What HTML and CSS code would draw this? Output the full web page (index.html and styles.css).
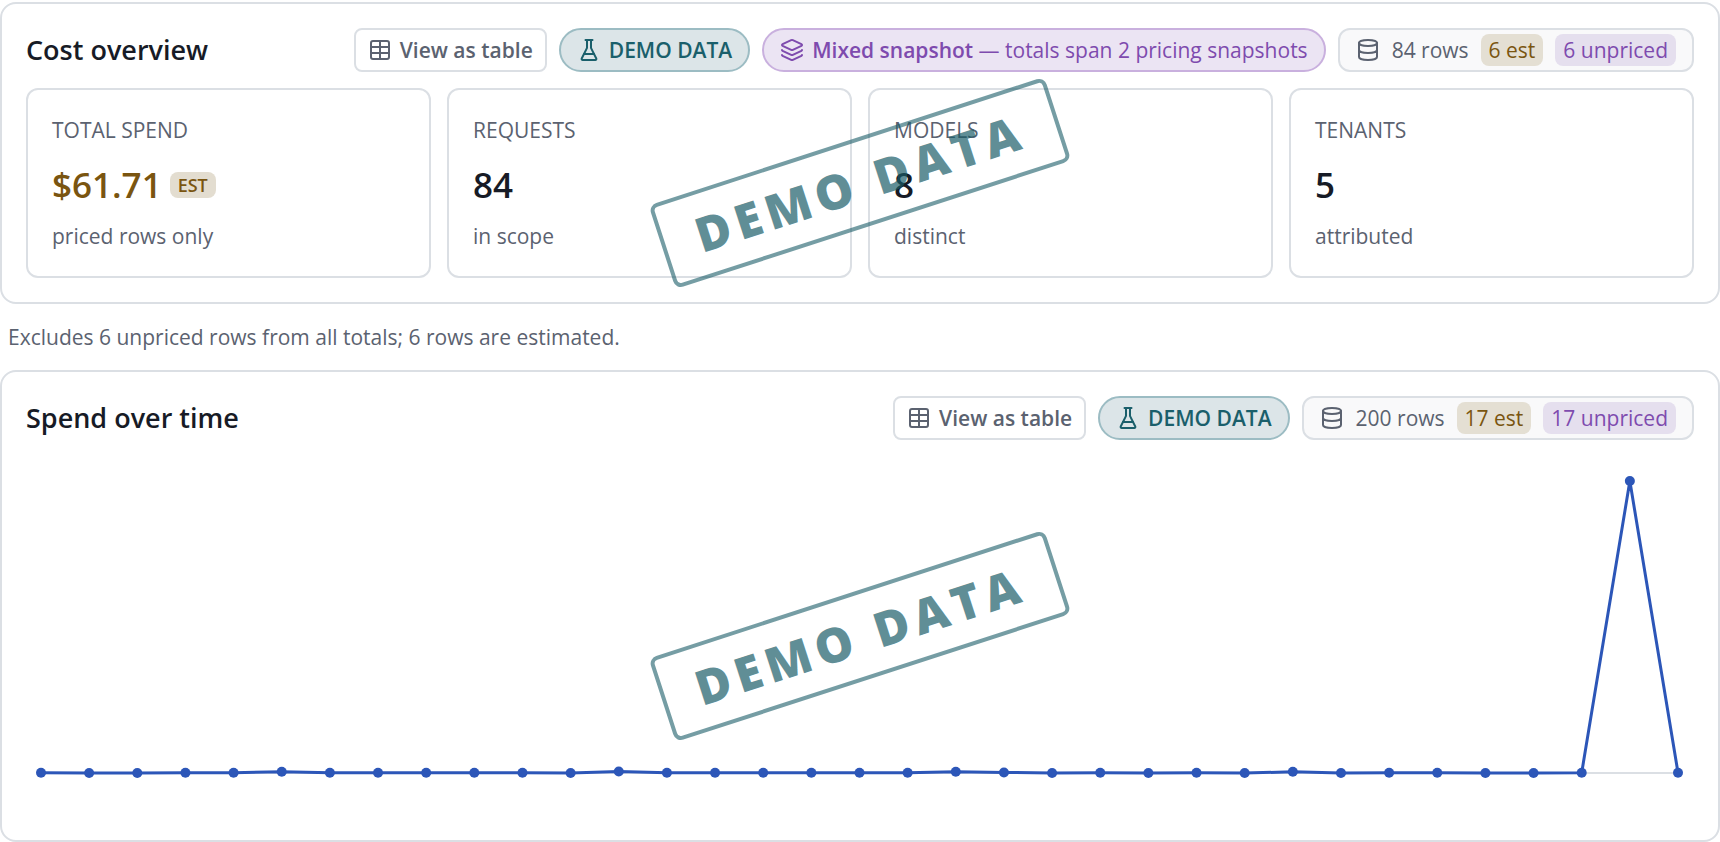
FILE: index.html
```html
<!DOCTYPE html>
<html lang="en">
<head>
    <meta charset="UTF-8">
    <meta name="viewport" content="width=device-width, initial-scale=1.0">
    <title>Cost overview</title>
    <link rel="stylesheet" href="styles.css">
</head>
<body>
    <!-- Shared icons -->
    <svg class="icon-defs" aria-hidden="true">
        <symbol id="icon-table" viewBox="0 0 24 24">
            <rect x="3" y="3" width="18" height="18" rx="2"/>
            <path d="M12 3v18M3 9h18M3 15h18"/>
        </symbol>
        <symbol id="icon-flask" viewBox="0 0 24 24">
            <path d="M10 2v7.527a2 2 0 0 1-.211.896L4.72 20.55a1 1 0 0 0 .9 1.45h12.76a1 1 0 0 0 .9-1.45l-5.069-10.127A2 2 0 0 1 14 9.527V2"/>
            <path d="M8.5 2h7M7 16h10"/>
        </symbol>
        <symbol id="icon-layers" viewBox="0 0 24 24">
            <path d="M12.83 2.18a2 2 0 0 0-1.66 0L2.6 6.08a1 1 0 0 0 0 1.83l8.58 3.91a2 2 0 0 0 1.66 0l8.58-3.9a1 1 0 0 0 0-1.83z"/>
            <path d="M2 12a1 1 0 0 0 .58.91l8.6 3.91a2 2 0 0 0 1.65 0l8.58-3.9A1 1 0 0 0 22 12"/>
            <path d="M2 17a1 1 0 0 0 .58.91l8.6 3.91a2 2 0 0 0 1.65 0l8.58-3.9A1 1 0 0 0 22 17"/>
        </symbol>
        <symbol id="icon-database" viewBox="0 0 24 24">
            <ellipse cx="12" cy="5" rx="9" ry="3"/>
            <path d="M3 5v14a9 3 0 0 0 18 0V5M3 12a9 3 0 0 0 18 0"/>
        </symbol>
    </svg>

    <section class="card">
        <header class="card-header">
            <h2 class="card-title">Cost overview</h2>
            <div class="card-actions">
                <button type="button" class="table-button"><svg class="icon"><use href="#icon-table"/></svg>View as table</button>
                <span class="pill demo"><svg class="icon"><use href="#icon-flask"/></svg>DEMO DATA</span>
                <span class="pill mixed"><svg class="icon"><use href="#icon-layers"/></svg><span><strong>Mixed snapshot</strong> — totals span 2 pricing snapshots</span></span>
                <span class="rows"><svg class="icon"><use href="#icon-database"/></svg>84 rows <span class="tag est">6 est</span> <span class="tag unpriced">6 unpriced</span></span>
            </div>
        </header>
        <div class="card-body">
            <div class="tiles">
                <div class="tile">
                    <div class="tile-label">TOTAL SPEND</div>
                    <div class="tile-value estimated">$61.71 <span class="est-badge">EST</span></div>
                    <div class="tile-note">priced rows only</div>
                </div>
                <div class="tile">
                    <div class="tile-label">REQUESTS</div>
                    <div class="tile-value">84</div>
                    <div class="tile-note">in scope</div>
                </div>
                <div class="tile">
                    <div class="tile-label">MODELS</div>
                    <div class="tile-value">8</div>
                    <div class="tile-note">distinct</div>
                </div>
                <div class="tile">
                    <div class="tile-label">TENANTS</div>
                    <div class="tile-value">5</div>
                    <div class="tile-note">attributed</div>
                </div>
            </div>
            <div class="watermark"><span class="stamp">DEMO DATA</span></div>
        </div>
    </section>

    <p class="footnote">Excludes 6 unpriced rows from all totals; 6 rows are estimated.</p>

    <section class="card">
        <header class="card-header">
            <h2 class="card-title">Spend over time</h2>
            <div class="card-actions">
                <button type="button" class="table-button"><svg class="icon"><use href="#icon-table"/></svg>View as table</button>
                <span class="pill demo"><svg class="icon"><use href="#icon-flask"/></svg>DEMO DATA</span>
                <span class="rows"><svg class="icon"><use href="#icon-database"/></svg>200 rows <span class="tag est">17 est</span> <span class="tag unpriced">17 unpriced</span></span>
            </div>
        </header>
        <div class="card-body">
            <svg class="chart" id="chart" viewBox="0 0 1668 360" role="img" aria-label="Spend over time">
                <line class="axis" x1="15" y1="317" x2="1652" y2="317"/>
            </svg>
            <div class="watermark"><span class="stamp">DEMO DATA</span></div>
        </div>
    </section>

    <script>
        // Daily spend, in thousandths of the peak day
        const spend = [1, 0, 0, 1, 1, 4, 1, 1, 1, 1, 1, 0, 5, 1, 1, 1, 1, 1, 1, 4, 2, 0, 1, 0, 1, 0, 4, 0, 1, 1, 0, 0, 1, 1000, 1];
        const plot = { left: 15, right: 1652, top: 25, bottom: 317 };

        const chart = document.getElementById('chart');
        const max = Math.max(...spend);
        const points = spend.map((value, i) => ({
            x: plot.left + (plot.right - plot.left) * i / (spend.length - 1),
            y: plot.bottom - (plot.bottom - plot.top) * value / max
        }));

        function addShape(name, attributes) {
            const shape = document.createElementNS('http://www.w3.org/2000/svg', name);
            for (const key in attributes) {
                shape.setAttribute(key, attributes[key]);
            }
            chart.appendChild(shape);
        }

        addShape('polyline', { class: 'line', points: points.map(p => `${p.x},${p.y}`).join(' ') });
        points.forEach(p => addShape('circle', { class: 'dot', cx: p.x, cy: p.y, r: 5 }));
    </script>
</body>
</html>
```

FILE: styles.css
```css
* {
    box-sizing: border-box;
}

body {
    margin: 0;
    padding-top: 2px;
    background-color: white;
    color: #171b26;
    font-family: "Open Sans", "Noto Sans", sans-serif;
    font-size: 21px;
    line-height: 32px;
}

.icon-defs {
    display: none;
}

.icon {
    width: 24px;
    height: 24px;
    flex: none;
    fill: none;
    stroke: currentColor;
    stroke-width: 2;
    stroke-linecap: round;
    stroke-linejoin: round;
}

.card {
    padding: 24px;
    border: 2px solid #dbdfe4;
    border-radius: 16px;
}

.card-header {
    display: flex;
    flex-wrap: wrap;
    align-items: center;
    justify-content: space-between;
    gap: 12px;
    margin-bottom: 16px;
}

.card-title {
    margin: 0;
    font-size: 27px;
    font-weight: 600;
}

.card-actions {
    display: flex;
    flex-wrap: wrap;
    gap: 12px;
}

.table-button,
.pill,
.rows {
    display: flex;
    align-items: center;
    gap: 8px;
    min-height: 44px;
    border: 2px solid #dbdfe4;
    white-space: nowrap;
}

.table-button {
    padding: 0 12px;
    border-radius: 8px;
    background-color: white;
    color: #5b6270;
    font-family: inherit;
    font-size: 21px;
    font-weight: 600;
    cursor: pointer;
}

.pill {
    padding: 0 16px;
    border-radius: 22px;
}

.demo {
    border-color: #9cbcc3;
    background-color: #dce5e8;
    color: #1a5f6b;
    font-weight: 600;
}

.mixed {
    border-color: #c9b0de;
    background-color: #ebe4f3;
    color: #7e4bae;
}

.mixed strong {
    font-weight: 600;
}

.rows {
    gap: 12px;
    padding: 0 16px;
    border-radius: 12px;
    background-color: #f9f9fa;
    color: #5b6270;
}

.tag {
    padding: 0 8px;
    border-radius: 8px;
}

.est {
    background-color: #e4dfd3;
    color: #7a5510;
}

.unpriced {
    background-color: #e5dfee;
    color: #7e4bae;
}

.card-body {
    position: relative;
}

.tiles {
    display: grid;
    grid-template-columns: repeat(4, 1fr);
    gap: 16px;
}

.tile {
    padding: 24px;
    border: 2px solid #dbdfe4;
    border-radius: 12px;
}

.tile-label,
.tile-note {
    color: #5b6270;
    line-height: 32px;
}

.tile-value {
    display: flex;
    align-items: center;
    gap: 8px;
    margin: 12px 0 8px;
    font-size: 35px;
    font-weight: 600;
    line-height: 54px;
}

.estimated {
    color: #7a5510;
}

.est-badge {
    padding: 0 8px;
    border-radius: 8px;
    background-color: #e3ddd0;
    font-size: 18px;
    line-height: 26px;
}

.footnote {
    margin: 0;
    padding: 17px 8px;
    color: #5b6270;
}

.chart {
    display: block;
    width: 100%;
}

.axis {
    stroke: #dbdfe4;
    stroke-width: 2;
}

.line {
    fill: none;
    stroke: #2c56b8;
    stroke-width: 3;
    stroke-linejoin: round;
}

.dot {
    fill: #2c56b8;
}

/* Stamp laid over the card content */
.watermark {
    position: absolute;
    inset: 0;
    display: flex;
    align-items: center;
    justify-content: center;
    pointer-events: none;
}

.stamp {
    padding: 8px 32px;
    border: 4px solid rgba(25, 92, 103, 0.6);
    border-radius: 8px;
    color: rgba(25, 92, 103, 0.7);
    font-size: 48px;
    font-weight: 800;
    letter-spacing: 0.12em;
    line-height: 64px;
    white-space: nowrap;
    transform: rotate(-18deg);
}
```
